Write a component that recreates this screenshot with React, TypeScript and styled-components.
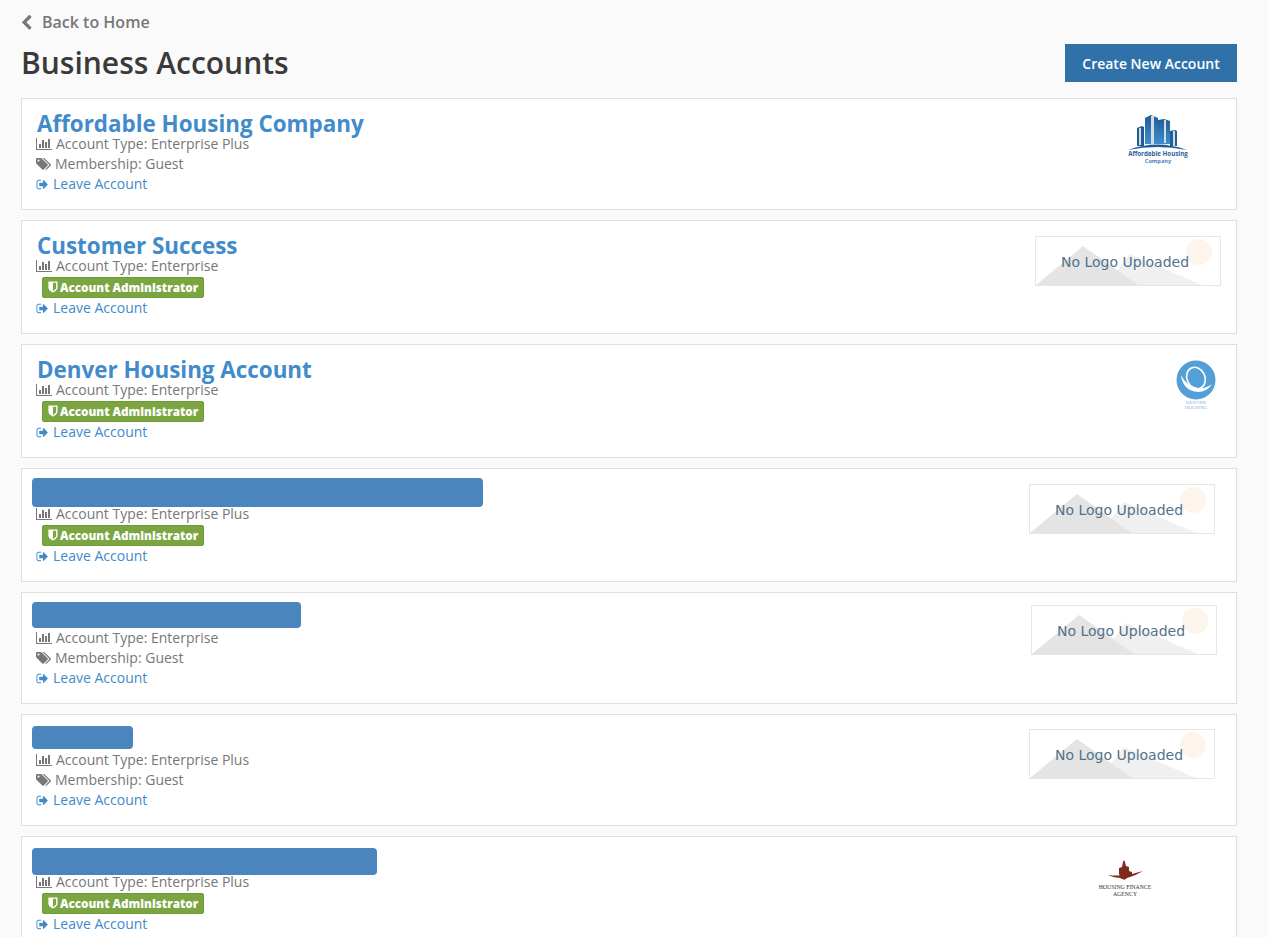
import React from "react";
import styled, { createGlobalStyle } from "styled-components";

const GlobalStyle = createGlobalStyle`
  html, body {
    margin: 0;
    height: 937px;
    overflow: hidden;
    background: #fafafa;
    color: #777;
    font-family: "Open Sans", "Liberation Sans", sans-serif;
    font-size: 14px;
    line-height: 20px;
  }
`;

const Page = styled.div`
  padding: 12px 31px 0 21px;
`;

const BackLink = styled.a`
  display: flex;
  align-items: center;
  gap: 10px;
  height: 20px;
  font-size: 16px;
  font-weight: 600;
  color: #777;
`;

const Header = styled.div`
  display: flex;
  justify-content: space-between;
  align-items: flex-start;
  margin-top: 10px;
  height: 56px;
`;

const PageTitle = styled.h1`
  margin: 0;
  font-size: 30px;
  line-height: 42px;
  font-weight: 600;
  color: #3a3a3a;
`;

const CreateButton = styled.button`
  margin-top: 2px;
  width: 172px;
  height: 38px;
  border: 0;
  background: #3071a9;
  color: #fff;
  font-family: inherit;
  font-size: 14px;
  font-weight: 600;
`;

const CardList = styled.div`
  display: flex;
  flex-direction: column;
  gap: 10px;
`;

const Card = styled.div`
  display: flex;
  justify-content: space-between;
  align-items: flex-start;
  flex-shrink: 0;
  padding: 15px;
  border: 1px solid #e0e0e0;
  background: #fff;
`;

const CardTitle = styled.h2`
  position: relative;
  margin: 0;
  height: 20px;
  font-size: 22.4px;
  line-height: 20px;
  font-weight: 700;
  color: #428bca;
  white-space: nowrap;
`;

const Redaction = styled.div<{ $width: number; $height: number; $top: number }>`
  position: absolute;
  left: -5px;
  top: ${(p) => p.$top}px;
  width: ${(p) => p.$width}px;
  height: ${(p) => p.$height}px;
  border-radius: 4px;
  background: #4a86bd;
`;

const InfoRow = styled.div`
  display: flex;
  align-items: center;
  height: 20px;
  gap: 4px;
  margin-left: -1px;
  white-space: nowrap;
`;

const LeaveLink = styled(InfoRow).attrs({ as: "a" })`
  color: #428bca;
`;

const Badge = styled.span`
  display: flex;
  align-items: center;
  gap: 2px;
  box-sizing: border-box;
  width: 162px;
  height: 21px;
  margin: 1px 0 0 5px;
  padding: 0 0 1px 5px;
  border: 1px solid #6f9a38;
  border-radius: 2px;
  background: #7ba541;
  color: #fff;
  font-size: 11.7px;
  font-weight: 800;
  white-space: nowrap;
`;

const Icon = styled.svg<{ $w: number; $h: number }>`
  display: block;
  flex-shrink: 0;
  width: ${(p) => p.$w}px;
  height: ${(p) => p.$h}px;
  fill: currentColor;
`;

const LogoSlot = styled.div<{ $right: number; $top: number }>`
  margin-right: ${(p) => p.$right}px;
  margin-top: ${(p) => p.$top}px;
  height: 0;
`;

const Placeholder = styled.div`
  position: relative;
  box-sizing: border-box;
  width: 186px;
  height: 50px;
  border: 1px solid #e6e6e6;
  background: #fff;
  overflow: hidden;
`;

const Sun = styled.span`
  position: absolute;
  right: 8px;
  top: 2px;
  width: 26px;
  height: 26px;
  border-radius: 50%;
  background: #fdf4ec;
`;

const Mountains = styled.svg`
  position: absolute;
  left: 0;
  bottom: 0;
  display: block;
`;

const PlaceholderText = styled.span`
  position: absolute;
  left: 25px;
  top: 15px;
  font-family: "DejaVu Sans", sans-serif;
  font-size: 14px;
  line-height: 20px;
  color: #52728a;
  white-space: nowrap;
`;

const BrandSvg = styled.svg`
  display: block;
`;

const ChartIcon = () => (
  <Icon $w={16} $h={14} viewBox="0 0 2048 1792">
    <path d="M640 896v512h-256v-512h256zm384-512v1024h-256v-1024h256zm1024 1152v128h-2048v-1536h128v1408h1920zm-640-896v768h-256v-768h256zm384-384v1152h-256v-1152h256z" />
  </Icon>
);

const TagsIcon = () => (
  <Icon $w={15} $h={14} viewBox="0 0 1920 1792">
    <path d="M448 448q0-53-37.500-90.500t-90.500-37.500-90.500 37.500-37.500 90.500 37.500 90.500 90.500 37.500 90.500-37.500 37.500-90.500zm1067 576q0 53-37 90l-491 492q-39 37-91 37-53 0-90-37l-715-716q-38-37-64.500-101t-26.500-117v-416q0-52 38-90t90-38h416q53 0 117 26.500t102 64.500l715 714q37 39 37 91zm384 0q0 53-37 90l-491 492q-39 37-91 37-36 0-59-14t-53-45l470-470q37-37 37-90 0-52-37-91l-715-714q-38-38-102-64.500t-117-26.500h224q53 0 117 26.500t102 64.500l715 714q37 39 37 91z" />
  </Icon>
);

const LeaveIcon = () => (
  <Icon $w={13} $h={13} viewBox="0 0 1792 1792">
    <path d="M704 1440q0 4 1 20t.5 26.500-3 23.500-10 19.500-20.500 6.500h-320q-119 0-203.500-84.500t-84.500-203.500v-704q0-119 84.500-203.500t203.500-84.500h320q13 0 22.500 9.500t9.500 22.500q0 4 1 20t.5 26.500-3 23.500-10 19.500-20.500 6.500h-320q-66 0-113 47t-47 113v704q0 66 47 113t113 47h312l11.500 1 11.500 3 8 5.500 7 9 2 13.500zm928-544q0 26-19 45l-544 544q-19 19-45 19t-45-19-19-45v-288h-448q-26 0-45-19t-19-45v-384q0-26 19-45t45-19h448v-288q0-26 19-45t45-19 45 19l544 544q19 19 19 45z" />
  </Icon>
);

const ShieldIcon = () => (
  <Icon $w={10} $h={12} viewBox="200 100 1400 1600">
    <path d="M1344 960v-640h-448v1137q119-63 213-137 235-184 235-360zm192-768v768q0 86-33.500 170.500t-83 150-118 127.500-126.500 103-121 77.500-89.500 49.500-42.500 20q-12 6-26 6t-26-6q-16-7-42.500-20t-89.500-49.500-121-77.500-126.500-103-118-127.500-83-150-33.500-170.500v-768q0-26 19-45t45-19h1152q26 0 45 19t19 45z" />
  </Icon>
);

const ChevronIcon = () => (
  <Icon $w={11} $h={15} viewBox="300 100 1200 1500">
    <path d="M1427 301l-531 531 531 531q19 19 19 45t-19 45l-166 166q-19 19-45 19t-45-19l-742-742q-19-19-19-45t19-45l742-742q19-19 45-19t45 19l166 166q19 19 19 45t-19 45z" />
  </Icon>
);

const NoLogo = () => (
  <Placeholder>
    <Sun />
    <Mountains width="184" height="48" viewBox="0 0 184 48">
      <path d="M70 48 L94 17 L166 48 Z" fill="#f0f0f0" />
      <path d="M0 48 L47 9 L102 48 Z" fill="#e4e4e4" />
    </Mountains>
    <PlaceholderText>No Logo Uploaded</PlaceholderText>
  </Placeholder>
);

const AffordableLogo = () => (
  <BrandSvg width="62" height="50" viewBox="0 0 62 50">
    <defs>
      <linearGradient id="tower" x1="0" y1="0" x2="0" y2="1">
        <stop offset="0" stopColor="#1d5c98" />
        <stop offset="1" stopColor="#3f8fd0" />
      </linearGradient>
    </defs>
    <path d="M10 13l5-2 2 1v19h-7z" fill="#1d5c98" />
    <path d="M12 13h2v17h-2z" fill="#d6dbe0" />
    <path d="M18 3l6-3 7 3v26h-13z" fill="url(#tower)" />
    <path d="M24 1h3v28h-3z" fill="#d6dbe0" />
    <path d="M31 5l6-1 6 2v23h-12z" fill="url(#tower)" />
    <path d="M37 5h2v23h-2z" fill="#d6dbe0" />
    <path d="M43 16l5-1 2 1v15h-7z" fill="#1f5f9c" />
    <path d="M46 16h2v15h-2z" fill="#d6dbe0" />
    <path d="M1 35q29-11 59 0q-30-6-59 0z" fill="#1d5c98" />
    <text x="31" y="40.500" textAnchor="middle" fontFamily="Open Sans, sans-serif" fontWeight="700" fontSize="6.200" fill="#2a6397">Affordable Housing</text>
    <text x="31" y="47.500" textAnchor="middle" fontFamily="Open Sans, sans-serif" fontWeight="700" fontSize="5.600" fill="#4a84b8">Company</text>
  </BrandSvg>
);

const DenverLogo = () => (
  <BrandSvg width="40" height="52" viewBox="0 0 40 52">
    <circle cx="20" cy="20" r="19.500" fill="#559fd8" />
    <ellipse cx="20" cy="18" rx="9" ry="11" transform="rotate(-25 20 18)" fill="none" stroke="#fff" strokeWidth="1.600" />
    <path d="M5 15 q2 16 17 17 q9 0 14-8 q-6 5-14 4 q-12-2-17-13z" fill="#fff" />
    <text x="20" y="44" textAnchor="middle" fontFamily="Liberation Serif, serif" fontSize="5" fill="#7fb2dc">DENVER</text>
    <text x="20" y="49" textAnchor="middle" fontFamily="Liberation Serif, serif" fontSize="5" fill="#7fb2dc">HOUSING</text>
  </BrandSvg>
);

const FinanceLogo = () => (
  <BrandSvg width="60" height="38" viewBox="0 0 60 38">
    <path d="M24 14v-6l3-1 1-5 1-2 1 2 1 4 3 1v4l3 1v4l-6 2-5 1z" fill="#7f2a1d" />
    <path d="M13 15q8 1 16 0q10-1 19-4q-8 5-16 7l-3 2-2-2q-8 0-14-3z" fill="#7f2a1d" />
    <text x="30" y="29" textAnchor="middle" fontFamily="Liberation Serif, serif" fontSize="5.800" fill="#333">HOUSING FINANCE</text>
    <text x="30" y="36" textAnchor="middle" fontFamily="Liberation Serif, serif" fontSize="5.800" fill="#333">AGENCY</text>
  </BrandSvg>
);

type Account = {
  name: string;
  type: string;
  admin: boolean;
  redaction?: { width: number; height: number; top: number };
  logo: React.ReactNode;
  logoRight: number;
  logoTop: number;
};

const accounts: Account[] = [
  { name: "Affordable Housing Company", type: "Enterprise Plus", admin: false, logo: <AffordableLogo />, logoRight: 32, logoTop: 1 },
  { name: "Customer Success", type: "Enterprise", admin: true, logo: <NoLogo />, logoRight: 0, logoTop: 0 },
  { name: "Denver Housing Account", type: "Enterprise", admin: true, logo: <DenverLogo />, logoRight: 5, logoTop: 0 },
  { name: "", type: "Enterprise Plus", admin: true, redaction: { width: 451, height: 29, top: -6 }, logo: <NoLogo />, logoRight: 6, logoTop: 0 },
  { name: "", type: "Enterprise", admin: false, redaction: { width: 269, height: 26, top: -6 }, logo: <NoLogo />, logoRight: 4, logoTop: -3 },
  { name: "", type: "Enterprise Plus", admin: false, redaction: { width: 101, height: 23, top: -4 }, logo: <NoLogo />, logoRight: 6, logoTop: -1 },
  { name: "", type: "Enterprise Plus", admin: true, redaction: { width: 345, height: 27, top: -4 }, logo: <FinanceLogo />, logoRight: 66, logoTop: 8 },
];

export default function App() {
  return (
    <>
      <GlobalStyle />
      <Page>
        <BackLink>
          <ChevronIcon />
          Back to Home
        </BackLink>
        <Header>
          <PageTitle>Business Accounts</PageTitle>
          <CreateButton>Create New Account</CreateButton>
        </Header>
        <CardList>
          {accounts.map((a, i) => (
            <Card key={i}>
              <div>
                <CardTitle>
                  {a.name}
                  {a.redaction && (
                    <Redaction $width={a.redaction.width} $height={a.redaction.height} $top={a.redaction.top} />
                  )}
                </CardTitle>
                <InfoRow>
                  <ChartIcon />
                  Account Type: {a.type}
                </InfoRow>
                {a.admin ? (
                  <Badge>
                    <ShieldIcon />
                    Account Administrator
                  </Badge>
                ) : (
                  <InfoRow>
                    <TagsIcon />
                    Membership: Guest
                  </InfoRow>
                )}
                <LeaveLink>
                  <LeaveIcon />
                  Leave Account
                </LeaveLink>
              </div>
              <LogoSlot $right={a.logoRight} $top={a.logoTop}>
                {a.logo}
              </LogoSlot>
            </Card>
          ))}
        </CardList>
      </Page>
    </>
  );
}
